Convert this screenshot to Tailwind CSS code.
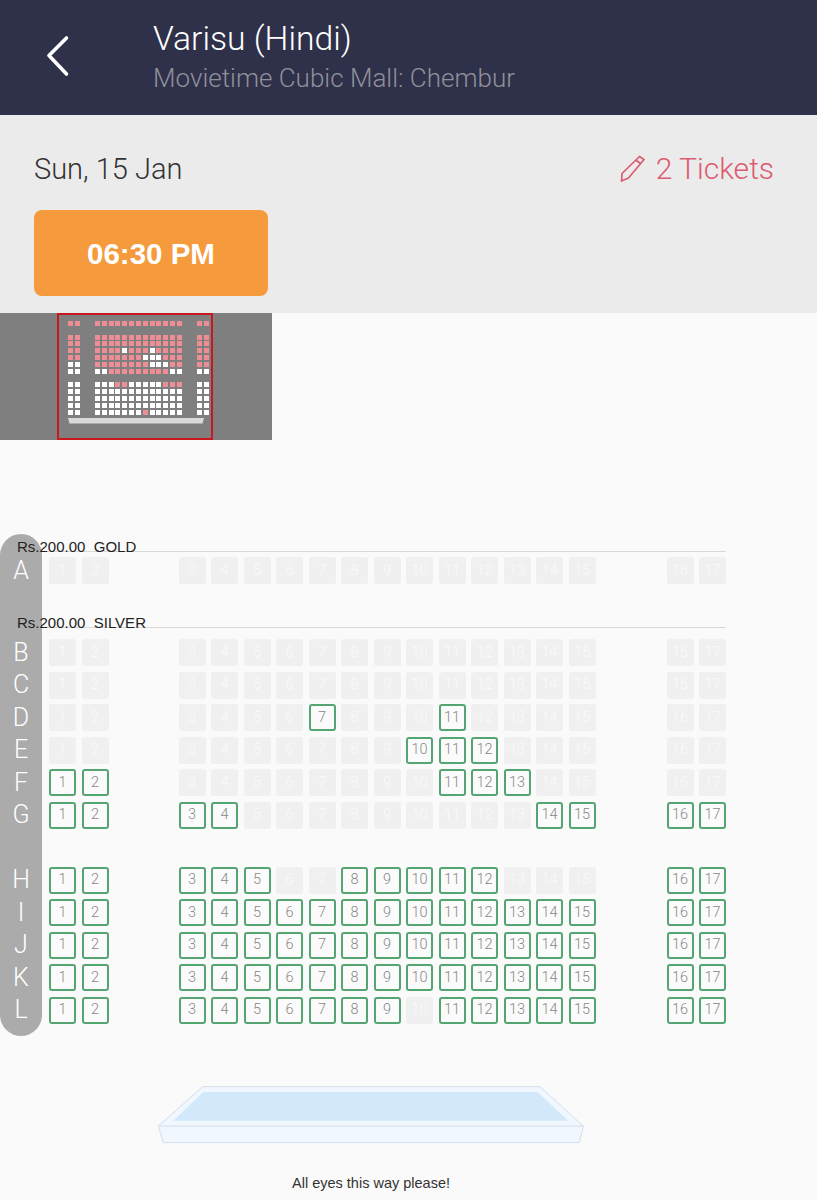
<!DOCTYPE html>
<html lang="en">
<head>
  <meta charset="UTF-8" />
  <meta name="viewport" content="width=device-width, initial-scale=1" />
  <title>Select Seats</title>
  <script src="https://cdn.jsdelivr.net/npm/@tailwindcss/browser@4"></script>
</head>
<body class="bg-[#fafafa] font-['Roboto',sans-serif] font-light h-[1200px] overflow-hidden">
  <header class="bg-[#2f3049] h-[115px] flex">
    <div class="w-[153px] pl-[44px] pt-[33px]">
      <svg width="28" height="46" viewBox="0 0 28 46" fill="none" stroke="#fff" stroke-width="3.6" stroke-linecap="round" stroke-linejoin="round"><path d="M22.5 5 L5 22.5 L22.5 41" /></svg>
    </div>
    <div class="pt-[18px]">
      <h1 class="text-white text-[33.7px] leading-[42px]">Varisu (Hindi)</h1>
      <p class="text-[#90909a] text-[26px] leading-[34px] mt-[1px]">Movietime Cubic Mall: Chembur</p>
    </div>
  </header>

  <section class="bg-[#ebebeb] h-[198px] px-[34px] pt-[36px]">
    <div class="flex justify-between items-center pr-[9px] h-[34px]">
      <span class="text-[#333] text-[29px] pt-[4px]">Sun, 15 Jan</span>
      <span class="text-[#dc5b70] text-[30px] flex items-center gap-[10px]">
        <svg width="26" height="27" viewBox="2 1 25 27" fill="none" stroke="#dc5b70" stroke-width="1.7" stroke-linejoin="round"><path d="M21 2.5 L25.5 5.5 L10 24 L3 27 L3.5 19.5 Z M17.8 6.5 L22.8 10" /></svg>
        2 Tickets
      </span>
    </div>
    <button class="mt-[25px] w-[234px] h-[86px] pt-[3px] rounded-[8px] bg-[#f59b3d] text-white text-[29.5px] font-bold font-['Liberation_Sans',sans-serif]">06:30 PM</button>
  </section>

  <section class="w-[272px] h-[127px] bg-[#7f7f7f]">
    <div id="miniMap" class="ml-[57px] w-[156px] h-full border-2 border-[#c8171f] pl-[8.75px] pt-[6px]"></div>
  </section>

  <section class="mt-[94px] flex items-start">
    <div id="rowLabels" class="w-[42px] rounded-[21px] bg-[#ababab] pb-[12.5px]"></div>
    <div class="w-[684px]">
      <div class="h-[18px] mb-[5px] border-b border-[#d9d9d9] flex items-end">
        <span class="-ml-[25px] -mb-[4px] text-[15px] leading-[16px] text-[#222] whitespace-pre font-['Liberation_Sans',sans-serif]">Rs.200.00  GOLD</span>
      </div>
      <div id="goldRows"></div>
      <div class="h-[18px] mt-[26px] mb-[11px] border-b border-[#d9d9d9] flex items-end">
        <span class="-ml-[25px] -mb-[4px] text-[15px] leading-[16px] text-[#222] whitespace-pre font-['Liberation_Sans',sans-serif]">Rs.200.00  SILVER</span>
      </div>
      <div id="silverRows"></div>
    </div>
  </section>

  <section class="mt-[50px] ml-[158px] w-[426px]">
    <svg width="426" height="58" viewBox="0 0 426 58" fill="none">
      <path d="M44.7 0.7 H382 L425.3 40 L421.3 56.7 H5.3 L0.3 40 Z" fill="#f0f7fe" stroke="#d5dcea" />
      <path d="M45.3 6 H379.3 L410.3 34.7 H15.3 Z" fill="#d2e9fb" />
      <path d="M0.3 40 H425.3" stroke="#d5dcea" />
    </svg>
    <p class="text-center text-[14.5px] text-[#333] mt-[29px] font-['Liberation_Sans',sans-serif]">All eyes this way please!</p>
  </section>

  <script>
    const allSeats = [1, 2, 3, 4, 5, 6, 7, 8, 9, 10, 11, 12, 13, 14, 15, 16, 17];
    const rows = [
      { label: 'A', open: [] },
      { label: 'B', open: [] },
      { label: 'C', open: [] },
      { label: 'D', open: [7, 11] },
      { label: 'E', open: [10, 11, 12] },
      { label: 'F', open: [1, 2, 11, 12, 13] },
      { label: 'G', open: [1, 2, 3, 4, 14, 15, 16, 17] },
      { label: 'H', open: [1, 2, 3, 4, 5, 8, 9, 10, 11, 12, 16, 17] },
      { label: 'I', open: allSeats },
      { label: 'J', open: allSeats },
      { label: 'K', open: allSeats },
      { label: 'L', open: allSeats.filter(n => n !== 10) },
    ];

    function seatGap(n) {
      if (n === 1) return '';
      if (n === 3) return 'ml-[70px]';
      if (n === 16) return 'ml-[71px]';
      return 'ml-[5.5px]';
    }

    function miniGap(n) {
      if (n === 1) return '';
      if (n === 3 || n === 16) return 'ml-[15.3px]';
      return 'ml-[1.85px]';
    }

    function labelGap(label) {
      if (label === 'A') return 'mt-[23px]';
      if (label === 'B') return 'mt-[55px]';
      if (label === 'H') return 'mt-[38px]';
      return 'mt-[5.5px]';
    }

    function rowGap(label) {
      if (label === 'A' || label === 'B') return '';
      if (label === 'H') return 'mt-[38px]';
      return 'mt-[5.5px]';
    }

    function miniRowGap(label) {
      if (label === 'A') return '';
      if (label === 'B' || label === 'H') return 'mt-[8.7px]';
      return 'mt-[1.8px]';
    }

    const rowLabels = document.getElementById('rowLabels');
    const goldRows = document.getElementById('goldRows');
    const silverRows = document.getElementById('silverRows');
    const miniMap = document.getElementById('miniMap');

    rows.forEach(row => {
      rowLabels.innerHTML += `<div class="${labelGap(row.label)} h-[27px] flex items-center justify-center text-white text-[25px]">${row.label}</div>`;

      const seats = allSeats.map(n => {
        const look = row.open.includes(n)
          ? 'border-2 border-[#55a573] text-[#888] bg-[#fbfbfb]'
          : 'bg-[#f0f0f0] text-[#fafafa]';
        return `<div class="${seatGap(n)} ${look} w-[27px] h-[27px] rounded-[3px] flex items-center justify-center text-[14.5px]">${n}</div>`;
      }).join('');
      const html = `<div class="${rowGap(row.label)} pl-[7px] flex">${seats}</div>`;
      if (row.label === 'A') goldRows.innerHTML += html;
      else silverRows.innerHTML += html;

      const minis = allSeats.map(n => {
        const tone = row.open.includes(n) ? 'bg-white' : 'bg-[#ee8d93]';
        return `<div class="${miniGap(n)} ${tone} w-[5px] h-[5px]"></div>`;
      }).join('');
      miniMap.innerHTML += `<div class="${miniRowGap(row.label)} flex">${minis}</div>`;
    });

    miniMap.innerHTML += `<svg class="mt-[3.5px]" width="138" height="6" viewBox="0 0 138 6"><path d="M0 0 H136 L134.5 5.5 H1.5 Z" fill="#d9d9d9" /></svg>`;
  </script>
</body>
</html>
